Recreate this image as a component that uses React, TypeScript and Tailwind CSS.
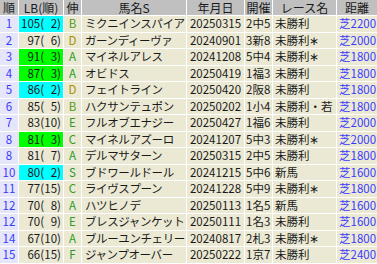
import React from "react";

type Row = {
  r: string;
  lb: number;
  lbr: number;
  lbc: "c" | "g" | "n";
  n: string;
  name: string;
  date: string;
  kai: string;
  race: string;
  dist: string;
};

const rows: Row[] = [
  { r: "1", lb: 105, lbr: 2, lbc: "c", n: "B", name: "ミクニインスパイア", date: "20250315", kai: "2中5", race: "未勝利", dist: "芝2200" },
  { r: "2", lb: 97, lbr: 6, lbc: "n", n: "D", name: "ガーンディーヴァ", date: "20240901", kai: "3新8", race: "未勝利∗", dist: "芝2000" },
  { r: "3", lb: 91, lbr: 3, lbc: "g", n: "A", name: "マイネルアレス", date: "20241208", kai: "5中4", race: "未勝利∗", dist: "芝1800" },
  { r: "4", lb: 87, lbr: 3, lbc: "g", n: "A", name: "オビドス", date: "20250419", kai: "1福3", race: "未勝利", dist: "芝1800" },
  { r: "5", lb: 86, lbr: 2, lbc: "c", n: "D", name: "フェイトライン", date: "20250420", kai: "2阪8", race: "未勝利", dist: "芝1800" },
  { r: "6", lb: 85, lbr: 5, lbc: "n", n: "B", name: "ハクサンテュポン", date: "20250202", kai: "1小4", race: "未勝利・若", dist: "芝1800" },
  { r: "7", lb: 83, lbr: 10, lbc: "n", n: "E", name: "フルオブエナジー", date: "20250427", kai: "1福6", race: "未勝利", dist: "芝2000" },
  { r: "8", lb: 81, lbr: 3, lbc: "g", n: "C", name: "マイネルアズーロ", date: "20241207", kai: "5中3", race: "未勝利∗", dist: "芝2000" },
  { r: "8", lb: 81, lbr: 7, lbc: "n", n: "A", name: "デルマサターン", date: "20250315", kai: "2中5", race: "未勝利", dist: "芝1800" },
  { r: "10", lb: 80, lbr: 2, lbc: "c", n: "S", name: "ブドワールドール", date: "20241215", kai: "5中6", race: "新馬", dist: "芝1600" },
  { r: "11", lb: 77, lbr: 15, lbc: "n", n: "C", name: "ライヴスプーン", date: "20241228", kai: "5中9", race: "未勝利∗", dist: "芝1800" },
  { r: "12", lb: 70, lbr: 8, lbc: "n", n: "A", name: "ハツヒノデ", date: "20250113", kai: "1名5", race: "新馬", dist: "芝1600" },
  { r: "12", lb: 70, lbr: 9, lbc: "n", n: "E", name: "ブレスジャンケット", date: "20250111", kai: "1名3", race: "未勝利", dist: "芝1600" },
  { r: "14", lb: 67, lbr: 10, lbc: "n", n: "A", name: "ブルーユンチェリー", date: "20240817", kai: "2札3", race: "未勝利∗", dist: "芝1800" },
  { r: "15", lb: 66, lbr: 15, lbc: "n", n: "F", name: "ジャンプオーバー", date: "20250222", kai: "1京7", race: "未勝利", dist: "芝2400" },
];

const nColor: Record<string, string> = {
  A: "text-[#1f9e1f]",
  B: "text-[#4f9a10]",
  C: "text-[#3a9a1a]",
  D: "text-[#a89000]",
  E: "text-[#3a9a2a]",
  F: "text-[#2a9a2a]",
  S: "text-[#2a9a2a]",
};

const lbBg: Record<string, string> = {
  c: "bg-[#00ffff]",
  g: "bg-[#00ff00]",
  n: "bg-[#ebe9d4]",
};

const headers = ["順", "LB(順)", "伸", "馬名S", "年月日", "開催", "レース名", "距離"];

export default function App() {
  return (
    <div className="w-[377px] h-[264px] overflow-hidden bg-white font-['Noto_Sans_CJK_JP',sans-serif] text-[11.5px] leading-none text-[#1a1a1a]">
      <div className="grid grid-cols-[18px_44px_17px_104px_57px_27px_63px_40px] grid-rows-[15px_repeat(15,15.5px)] gap-px">
        {headers.map((h) => (
          <div key={h} className="bg-[#c0c0c0] flex items-center justify-center whitespace-nowrap text-[12px]">
            {h}
          </div>
        ))}
        {rows.map((row, i) => (
          <React.Fragment key={i}>
            <div className="bg-[#e6e6fb] flex items-center justify-center text-[#3a3aff]">{row.r}</div>
            <div className={`${lbBg[row.lbc]} flex items-center justify-end pr-[2px] whitespace-nowrap`}>
              {row.lb}(<span className="inline-block w-[13px] text-right">{row.lbr}</span>)
            </div>
            <div className={`bg-[#ebe9d4] flex items-center justify-center ${nColor[row.n]}`}>{row.n}</div>
            <div className="bg-[#ebe9d4] flex items-center pl-[3px] whitespace-nowrap overflow-hidden tracking-[-0.4px]">
              {row.name}
            </div>
            <div className="bg-[#ebe9d4] flex items-center justify-center whitespace-nowrap">{row.date}</div>
            <div className="bg-[#ebe9d4] flex items-center pl-px whitespace-nowrap overflow-hidden">{row.kai}</div>
            <div className="bg-[#ebe9d4] flex items-center pl-[2px] whitespace-nowrap overflow-hidden">{row.race}</div>
            <div className="bg-[#ebe9d4] flex items-center pl-[2px] whitespace-nowrap overflow-hidden text-[#3a3aff]">{row.dist}</div>
          </React.Fragment>
        ))}
      </div>
    </div>
  );
}
